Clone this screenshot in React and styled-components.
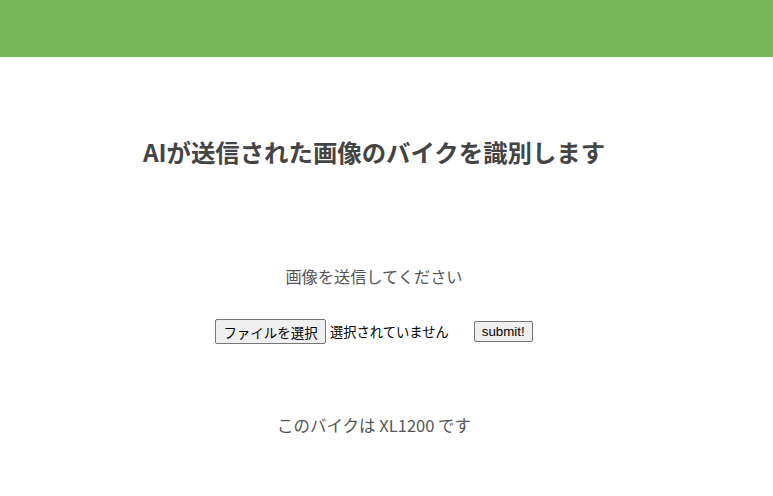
import React from 'react';
import styled, { createGlobalStyle } from 'styled-components';

const GlobalStyle = createGlobalStyle`
  body{
    margin: 0;
    background: #fff;
    font-family: "Noto Sans CJK JP", "Noto Sans", sans-serif;
    color: #444;
  }
`;

export default function App() {
  return (
    <>
      <GlobalStyle />
      <Header />
      <Main>
        <Title>AIが送信された画像のバイクを識別します</Title>
        <Form onSubmit={(e) => e.preventDefault()}>
          <Lead>画像を送信してください</Lead>
          <Controls>
            <FilePick>
              <FileButton htmlFor='file'>ファイルを選択</FileButton>
              <input id='file' type='file' hidden />
              <FileName>選択されていません</FileName>
            </FilePick>
            <Submit type='submit'>submit!</Submit>
          </Controls>
        </Form>
        <Result>このバイクは XL1200 です</Result>
      </Main>
    </>
  );
}

const Header = styled.header`
  height: 57px;
  background-color: #77b55a;
`;

const Main = styled.main`
  width: 748px;
  display: flex;
  flex-direction: column;
  align-items: center;
`;

const Title = styled.h1`
  margin: 79px 0 0;
  font-size: 24.4px;
  line-height: 32px;
  font-weight: bold;
  color: #444;
`;

const Form = styled.form`
  margin-top: 97px;
  display: flex;
  flex-direction: column;
  align-items: center;
`;

const Lead = styled.p`
  margin: 0;
  font-size: 16.2px;
  line-height: 22px;
  color: #555;
`;

const Controls = styled.div`
  margin-top: 32px;
  display: flex;
  align-items: center;
  gap: 25px;
`;

const FilePick = styled.div`
  display: flex;
  align-items: center;
  gap: 4px;
`;

const FileButton = styled.label`
  box-sizing: border-box;
  height: 25px;
  padding: 0 7px;
  display: flex;
  align-items: center;
  font-size: 13.5px;
  color: #000;
  background: #efefef;
  border: 1px solid #767676;
  border-radius: 2px;
`;

const FileName = styled.span`
  font-size: 13.3px;
  color: #000;
`;

const Submit = styled.button`
  box-sizing: border-box;
  height: 21px;
  padding: 0 7px;
  font-family: "Liberation Sans", Arial, sans-serif;
  font-size: 13.3px;
  color: #000;
  background: #efefef;
  border: 1px solid #767676;
  border-radius: 2px;
`;

const Result = styled.p`
  margin: 70px 0 0;
  font-size: 16.5px;
  line-height: 22px;
  color: #555;
`;
